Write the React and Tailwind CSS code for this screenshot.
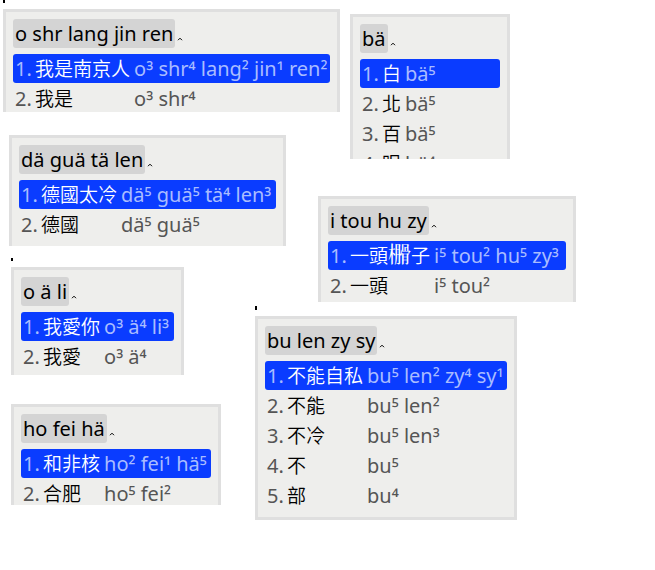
const font =
  "font-['Noto_Sans','Noto_Sans_CJK_TC',sans-serif]";

// Tone digits sit lower than the font's own superscripts.
function Code({ text }) {
  return text.split(/([¹²³⁴⁵])/).map((part, i) =>
    i % 2 ? (
      <span key={i} className="align-[-2px] leading-none">
        {part}
      </span>
    ) : (
      part
    ),
  );
}

// Characters outside the basic plane are drawn a little larger.
function Word({ text }) {
  return Array.from(text).map((ch, i) =>
    ch.length > 1 ? (
      <span key={i} className="text-[23px] leading-none">
        {ch}
      </span>
    ) : (
      ch
    ),
  );
}

function Candidate({ index, word, code }) {
  const on = index === 0;
  return (
    <li className="col-span-3 grid grid-cols-subgrid">
      <button
        type="button"
        aria-pressed={on}
        className={`col-span-3 grid h-[29px] grid-cols-subgrid items-center rounded-[3px] px-0.5 text-left leading-[27px] whitespace-nowrap ${
          on ? 'bg-[#0a3cff] text-[#a9bcff]' : 'text-[#555]'
        }`}
      >
        <span>{index + 1}.</span>
        <span
          className={`pr-1 pb-0.5 font-['Noto_Sans_CJK_TC',sans-serif] text-[19px] leading-[27px] font-[350] ${
            on ? 'text-white' : 'text-black'
          }`}
        >
          <Word text={word} />
        </span>
        <span>
          <Code text={code} />
        </span>
      </button>
    </li>
  );
}

function Panel({ className, typed, items }) {
  return (
    <section
      className={`shrink-0 overflow-hidden border-[3px] border-[#dfdfdf] bg-[#eeeeec] p-[7px] ${className}`}
    >
      <div className="mb-1.5 flex h-[29px] items-center leading-[29px] text-black">
        <span className="rounded-[3px] bg-[#d4d4d4] px-0.5 whitespace-nowrap">{typed}</span>
        <svg className="mt-2.5 ml-0.5 h-1 w-1.5" viewBox="0 0 6 4" fill="none" stroke="#000">
          <path d="M1 3.2 3 1.2l2 2" />
        </svg>
      </div>
      <ol className="grid grid-cols-[22px_auto_1fr] gap-y-px">
        {items.map(([word, code], i) => (
          <Candidate key={word} index={i} word={word} code={code} />
        ))}
      </ol>
    </section>
  );
}

function Caret({ className }) {
  return <div className={`w-0.5 shrink-0 bg-black ${className}`} />;
}

export default function App() {
  return (
    <main className={`flex min-h-screen items-start bg-white text-[20px] ${font}`}>
      <div className="flex w-[255px] shrink-0 flex-col items-start">
        <Caret className="ml-[3px] h-[3px]" />
        <Panel
          className="mt-1.5 ml-[3px] h-[103px] w-[337px] border-b-0"
          typed="o shr lang jin ren"
          items={[
            ['我是南京人', 'o³ shr⁴ lang² jin¹ ren²'],
            ['我是', 'o³ shr⁴'],
          ]}
        />
        <Panel
          className="mt-[23px] ml-[9px] h-[111px] w-[277px] border-b-0"
          typed="dä guä tä len"
          items={[
            ['德國太冷', 'dä⁵ guä⁵ tä⁴ len³'],
            ['德國', 'dä⁵ guä⁵'],
          ]}
        />
        <Caret className="mt-3 ml-[11px] h-[3px]" />
        <Panel
          className="mt-1.5 ml-[11px] h-[108px] w-[173px] border-b-0"
          typed="o ä li"
          items={[
            ['我愛你', 'o³ ä⁴ li³'],
            ['我愛', 'o³ ä⁴'],
          ]}
        />
        <Panel
          className="mt-[29px] ml-[11px] h-[101px] w-[210px] border-b-0"
          typed="ho fei hä"
          items={[
            ['和非核', 'ho² fei¹ hä⁵'],
            ['合肥', 'ho⁵ fei²'],
          ]}
        />
      </div>
      <div className="flex flex-col items-start">
        <Panel
          className="mt-3.5 ml-[95px] h-[145px] w-[160px] border-b-0"
          typed="bä"
          items={[
            ['白', 'bä⁵'],
            ['北', 'bä⁵'],
            ['百', 'bä⁵'],
            ['眼', 'bä⁴'],
          ]}
        />
        <Panel
          className="mt-[37px] ml-[63px] h-[106px] w-[258px] border-b-0"
          typed="i tou hu zy"
          items={[
            ['一頭𣝗子', 'i⁵ tou² hu⁵ zy³'],
            ['一頭', 'i⁵ tou²'],
          ]}
        />
        <Caret className="mt-1 h-1" />
        <Panel
          className="mt-1.5 w-[262px]"
          typed="bu len zy sy"
          items={[
            ['不能自私', 'bu⁵ len² zy⁴ sy¹'],
            ['不能', 'bu⁵ len²'],
            ['不冷', 'bu⁵ len³'],
            ['不', 'bu⁵'],
            ['部', 'bu⁴'],
          ]}
        />
      </div>
    </main>
  );
}
